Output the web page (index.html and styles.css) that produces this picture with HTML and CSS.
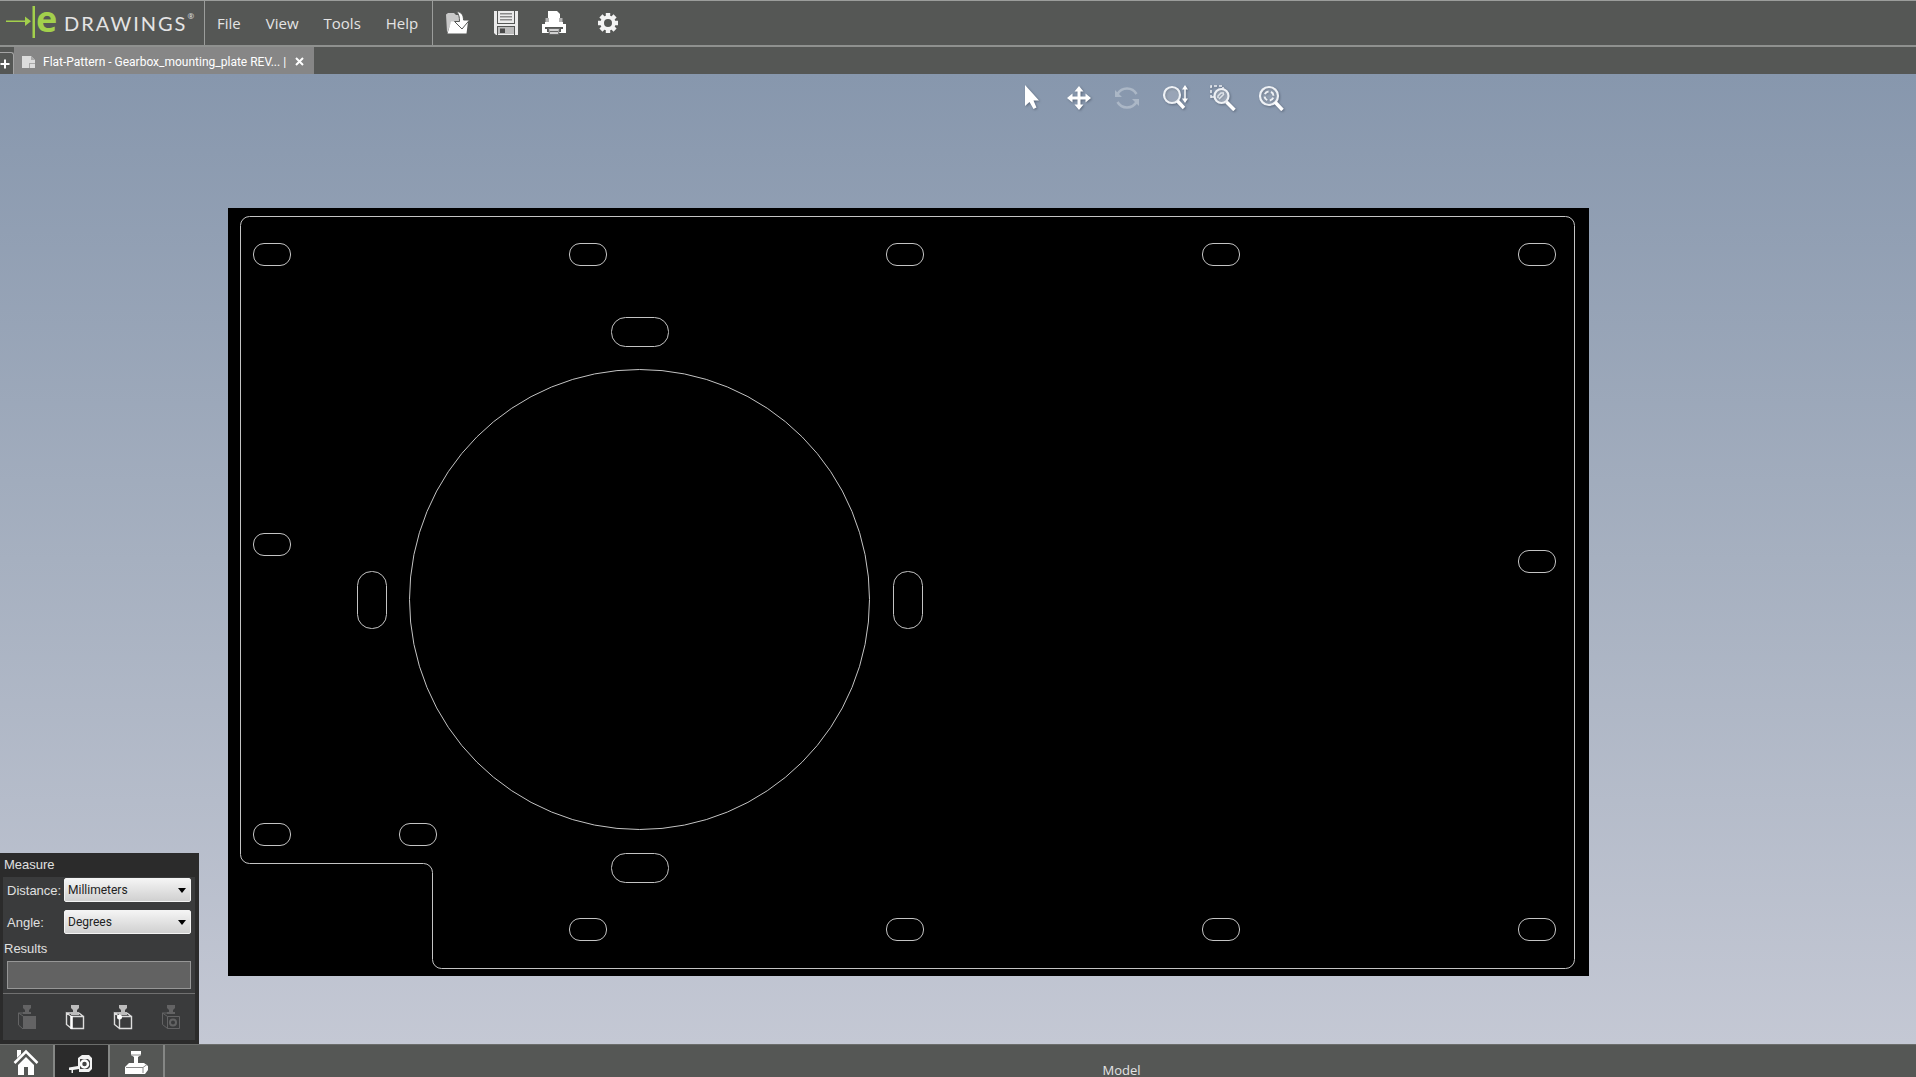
FILE: index.html
```html
<!DOCTYPE html>
<html lang="en">
<head>
<meta charset="utf-8">
<title>eDrawings</title>
<link rel="stylesheet" href="styles.css">
</head>
<body>
<header class="topbar">
  <div class="brand">
    <svg class="brand-mark" width="30" height="34" viewBox="0 0 30 34" aria-hidden="true">
      <path d="M0 14.500H19V16H0zM19 10.500L25 15.200L19 20zM26.500 0H29V32H26.500z"/>
    </svg>
    <span class="brand-e">e</span><span class="brand-name">DRAWINGS</span><span class="brand-reg">®</span>
  </div>
  <nav class="menu">
    <button type="button">File</button>
    <button type="button">View</button>
    <button type="button">Tools</button>
    <button type="button">Help</button>
  </nav>
  <div class="quick">
    <button type="button" aria-label="Open">
      <svg width="26" height="26" viewBox="0 0 26 26">
        <path fill="#c9c9c9" d="M1 4.500L3 3H9L11 5H17L18 10L6 13L2.500 22H2Z"/>
        <path fill="#fff" d="M6 11.500H23L21.500 23.500H2.500Z"/>
        <path fill="#fff" stroke="#555755" d="M11.500 1.500C16.500 2 18.500 5 18.500 10H24.500L17 19L9.500 11.500H14.500C14.500 7 14 4.500 11.500 1.500Z"/>
      </svg>
    </button>
    <button type="button" aria-label="Save">
      <svg width="26" height="26" viewBox="0 0 26 26">
        <path fill="#ececec" d="M1 1H25V25H3L1 23Z"/>
        <path fill="#555755" d="M4 1H5V13H21V1H22V14H4zM4 16H22V25H21V17H5V25H4z"/>
        <path fill="#8a8a8a" d="M7 3H19V4.500H7zM7 6H19V7.500H7zM7 9H19V10.500H7z"/>
        <path fill="#bcbcbc" d="M5 17H21V24H5z"/>
        <path fill="#4a4a4a" d="M7 18.500H12V23H7z"/>
      </svg>
    </button>
    <button type="button" aria-label="Print">
      <svg width="26" height="26" viewBox="0 0 26 26">
        <path fill="#fff" d="M7 1H16L19 4V13H7z"/>
        <path fill="#b4b4b4" d="M4.500 8H21.500V14H4.500z"/>
        <path fill="#fff" d="M8 3H18V12H8zM1 14H4V12H22V14H25V23H1z"/>
        <path fill="#555755" d="M4 17H22V19H20V22H6V19H4z"/>
        <path fill="#d0d0d0" stroke="#666" d="M7.500 18.500H18.500L17.500 24.500H8.500zM9 21.500H17"/>
      </svg>
    </button>
    <button type="button" class="gear" aria-label="Options">
      <svg width="22" height="22" viewBox="-11 -11 22 22">
        <g fill="#f4f4f4">
          <path id="tooth" d="M-2.200 -10H2.200V-6H-2.200zM-2.200 6H2.200V10H-2.200z"/>
          <use href="#tooth" transform="rotate(45)"/>
          <use href="#tooth" transform="rotate(90)"/>
          <use href="#tooth" transform="rotate(135)"/>
        </g>
        <circle r="5.800" fill="none" stroke="#f4f4f4" stroke-width="3.600"/>
      </svg>
    </button>
  </div>
</header>

<div class="tabs">
  <button type="button" class="tab-add" aria-label="New tab">
    <svg width="10" height="10" viewBox="0 0 10 10"><path d="M5 0.500V9.500M0.500 5H9.500" stroke="#fff" stroke-width="2"/></svg>
  </button>
  <div class="tab">
    <svg width="14" height="12" viewBox="0 0 14 12" aria-hidden="true">
      <path fill="#dcdcdc" d="M0 0H9L13 4V12H0z"/><path fill="#a8a8a8" d="M9 0V4H13zM7 7H13V8H7zM7 7H8V12H7z"/>
    </svg>
    <span class="tab-title">Flat-Pattern - Gearbox_mounting_plate REV... |</span>
    <button type="button" class="tab-close" aria-label="Close">
      <svg width="9" height="9" viewBox="0 0 9 9"><path d="M1 1L8 8M8 1L1 8" stroke="#fff" stroke-width="2"/></svg>
    </button>
  </div>
</div>

<main class="viewer">
  <svg class="drawing" viewBox="0 0 1916 969" preserveAspectRatio="xMidYMin meet" role="img" aria-label="Flat pattern of gearbox mounting plate">
    <defs>
      <rect id="slot" x="-18.500" y="-11" width="37" height="22" rx="10.500"/>
      <rect id="slot-wide" x="-28.500" y="-14.500" width="57" height="29" rx="14"/>
    </defs>
    <rect x="228" y="134" width="1361" height="768"/>
    <g fill="none" stroke="#c4c4c4" stroke-width="1">
      <path d="M249.500 142.500H1565.500A9 9 0 0 1 1574.500 151.500V885.500A9 9 0 0 1 1565.500 894.500H441.500A9 9 0 0 1 432.500 885.500V798.500A9 9 0 0 0 423.500 789.500H249.500A9 9 0 0 1 240.500 780.500V151.500A9 9 0 0 1 249.500 142.500Z"/>
      <circle cx="639.500" cy="525.500" r="230"/>
      <use href="#slot" x="272" y="180.500"/>
      <use href="#slot" x="588" y="180.500"/>
      <use href="#slot" x="905" y="180.500"/>
      <use href="#slot" x="1221" y="180.500"/>
      <use href="#slot" x="1537" y="180.500"/>
      <use href="#slot" x="272" y="470.500"/>
      <use href="#slot" x="1537" y="487.500"/>
      <use href="#slot" x="272" y="760.500"/>
      <use href="#slot" x="418" y="760.500"/>
      <use href="#slot" x="588" y="855.500"/>
      <use href="#slot" x="905" y="855.500"/>
      <use href="#slot" x="1221" y="855.500"/>
      <use href="#slot" x="1537" y="855.500"/>
      <use href="#slot-wide" x="640" y="258"/>
      <use href="#slot-wide" x="640" y="794"/>
      <use href="#slot-wide" transform="translate(372 526) rotate(90)"/>
      <use href="#slot-wide" transform="translate(908 526) rotate(90)"/>
    </g>
  </svg>

  <div class="viewtools">
    <button type="button" aria-label="Select">
      <svg width="26" height="26" viewBox="0 0 26 26"><path fill="#fff" d="M7 0V21L11.500 17L15.500 24L18.500 22.500L15.500 15.500H21Z"/></svg>
    </button>
    <button type="button" aria-label="Pan">
      <svg width="26" height="26" viewBox="0 0 26 26"><path fill="#fff" d="M13 1L17.500 6.500H14.500V11.500H19.500V8.500L25 13L19.500 17.500V14.500H14.500V19.500H17.500L13 25L8.500 19.500H11.500V14.500H6.500V17.500L1 13L6.500 8.500V11.500H11.500V6.500H8.500Z"/></svg>
    </button>
    <button type="button" class="off" disabled aria-label="Rotate">
      <svg width="26" height="26" viewBox="0 0 26 26"><g fill="none" stroke="#abb7c6" stroke-width="2.500"><path d="M3.500 9A11 11 0 0 1 22.500 9M22.500 17A11 11 0 0 1 3.500 17"/></g><path fill="#abb7c6" d="M1 5V12H8zM25 21V14H18z"/></svg>
    </button>
    <button type="button" aria-label="Zoom">
      <svg width="26" height="26" viewBox="0 0 26 26"><circle cx="10" cy="10" r="8" fill="#ffffff33" stroke="#eef1f5" stroke-width="2.200"/><path d="M15.500 16L22 23" stroke="#fff" stroke-width="3.500"/><path d="M23 3V15" stroke="#fff" stroke-width="1.500"/><path fill="#fff" d="M23 0L26 4.500H20zM23 18L26 13.500H20z"/></svg>
    </button>
    <button type="button" aria-label="Zoom to area">
      <svg width="26" height="26" viewBox="0 0 26 26"><path d="M1 13V1H13V4M1 12H5" fill="none" stroke="#eef1f5" stroke-width="1.500" stroke-dasharray="3 2"/><circle cx="11.500" cy="11" r="7" fill="#ffffff44" stroke="#eef1f5" stroke-width="2.200"/><path d="M8 13V11L11 8H14M9 14L14 9" fill="none" stroke="#dfe4ea" stroke-width="1.500"/><path d="M16.500 17L24.500 25" stroke="#fff" stroke-width="3.500"/></svg>
    </button>
    <button type="button" aria-label="Zoom to fit">
      <svg width="26" height="26" viewBox="0 0 26 26"><circle cx="11" cy="11" r="9" fill="#ffffff22" stroke="#eef1f5" stroke-width="2.200"/><circle cx="11" cy="11" r="4.500" fill="none" stroke="#eef1f5" stroke-width="2" stroke-dasharray="4.500 2.570" transform="rotate(20 11 11)"/><path d="M17 17L24.500 25" stroke="#fff" stroke-width="3.500"/></svg>
    </button>
  </div>

  <section class="measure">
    <h2>Measure</h2>
    <div class="measure-body">
      <div class="field">
        <label for="distance">Distance:</label>
        <select id="distance"><option>Millimeters</option><option>Inches</option></select>
      </div>
      <div class="field">
        <label for="angle">Angle:</label>
        <select id="angle"><option>Degrees</option><option>Radians</option></select>
      </div>
      <label class="results-label" for="results">Results</label>
      <input id="results" type="text" readonly>
      <div class="filters">
        <button type="button" class="off" disabled aria-label="Select faces">
          <svg width="20" height="26" viewBox="0 0 20 26"><g fill="#8c8c8c"><path d="M6 1H14V4L12 6V8H14V10H6V8H8V6L6 4z"/><path d="M6 12H19V25H6z"/></g><path d="M6 25L1.500 21V9L6 12M1.500 9H13" fill="none" stroke="#8c8c8c"/></svg>
        </button>
        <button type="button" aria-label="Select edges">
          <svg width="20" height="26" viewBox="0 0 20 26"><path fill="#bdbdbd" d="M6 1H14V4L12 6V8H14V11H6V8H8V6L6 4z"/><path d="M6.500 12.500H18.500V24.500H6.500zM6.500 24.500L1.500 20.500V9L6.500 12.500M1.500 9H6M14 9L18.500 12.500" fill="none" stroke="#ddd" stroke-width="1.400"/><path d="M6.500 12V25" stroke="#fff" stroke-width="2.500"/></svg>
        </button>
        <button type="button" aria-label="Select vertices">
          <svg width="20" height="26" viewBox="0 0 20 26"><path fill="#bdbdbd" d="M6 1H14V4L12 6V8H14V11H6V8H8V6L6 4z"/><path d="M6.500 12.500H18.500V24.500H6.500zM6.500 24.500L1.500 20.500V9L6.500 12.500M1.500 9H6M14 9L18.500 12.500" fill="none" stroke="#ddd" stroke-width="1.400"/><circle cx="6.500" cy="13" r="2.500" fill="#fff"/></svg>
        </button>
        <button type="button" class="off" disabled aria-label="Select holes">
          <svg width="20" height="26" viewBox="0 0 20 26"><path fill="#8c8c8c" d="M6 1H14V4L12 6V8H14V10H6V8H8V6L6 4z"/><path d="M6.500 12.500H18.500V24.500H6.500zM6.500 24.500L1.500 20.500V9L6.500 12.500M1.500 9H6" fill="none" stroke="#8c8c8c"/><circle cx="12" cy="18.500" r="3" fill="none" stroke="#8c8c8c" stroke-width="2"/></svg>
        </button>
      </div>
    </div>
  </section>
</main>

<footer class="bottombar">
  <button type="button" aria-label="Home">
    <svg width="26" height="26" viewBox="0 0 26 26"><path fill="#fff" d="M4 1H8V5L4 9zM5 16L13 8L21 16V26H15V18H11V26H5z"/><path d="M1.500 14L13 2.500L24.500 14" fill="none" stroke="#fff" stroke-width="2.500"/></svg>
  </button>
  <button type="button" class="active" aria-label="Measure">
    <svg width="26" height="26" viewBox="0 0 26 26"><path fill="#f2f2f2" d="M10 9L14 6H21L24 9V20L21 23H11V20L5 21V24H3.500V21H1V18.500L10 17z"/><path d="M12 10H20L22 12V18L20 20H12z" fill="#444"/><circle cx="16.500" cy="15" r="3.500" fill="#444" stroke="#fff" stroke-width="2.500"/></svg>
  </button>
  <button type="button" aria-label="Stamp">
    <svg width="26" height="26" viewBox="0 0 26 26"><path fill="#fff" d="M8 2H18V6L15 8V14H21L25 17V21L22 25H2V18L6 14H11V8L8 6z"/><path d="M3 18.500H20L24 15.500M20 18.500V24M8 6H18" fill="none" stroke="#8a8a8a"/></svg>
  </button>
  <span class="sheet-name">Model</span>
</footer>
</body>
</html>
```
FILE: styles.css
```css
* { box-sizing: border-box; }

body {
  display: flex;
  flex-direction: column;
  height: 100vh;
  margin: 0;
  overflow: hidden;
  background: #555755;
  color: #e4e4e4;
  font-family: "Open Sans", "Noto Sans", sans-serif;
}

button {
  display: flex;
  align-items: center;
  justify-content: center;
  margin: 0;
  padding: 0;
  border: 0;
  background: none;
  color: inherit;
  font: inherit;
}

svg { flex: none; }

.topbar {
  display: flex;
  flex: none;
  height: 47px;
  border-top: 1px solid #9b9d9b;
  border-bottom: 2px solid #8f918f;
}

.brand {
  display: flex;
  align-items: center;
  width: 205px;
  padding-left: 6px;
  border-right: 1px solid #9b9d9b;
}

.brand-mark { fill: #a3d04c; }

.brand-e {
  width: 28px;
  padding-bottom: 8px;
  color: #a3d04c;
  font-size: 36px;
  font-weight: 700;
  line-height: 36px;
}

.brand-name {
  font-family: Lato, sans-serif;
  font-size: 20px;
  letter-spacing: 2px;
  line-height: 40px;
}

.brand-reg {
  padding-bottom: 14px;
  font-size: 8px;
  line-height: 8px;
}

.menu {
  display: flex;
  gap: 25px;
  width: 228px;
  padding-left: 12px;
  border-right: 1px solid #9b9d9b;
  font-size: 15px;
}

.quick {
  display: flex;
  gap: 22px;
  padding-left: 12px;
}

.gear { margin-left: 8px; }

.tabs {
  display: flex;
  flex: none;
  height: 27px;
}

.tab-add {
  align-self: flex-end;
  width: 14px;
  height: 22px;
  padding-right: 4px;
  border: solid #a4a4a4;
  border-width: 1px 1px 0 0;
  border-radius: 0 3px 0 0;
}

.tab {
  display: flex;
  align-items: center;
  gap: 7px;
  width: 300px;
  padding: 2px 10px 0 8px;
  background: #868686;
  font-family: Roboto, sans-serif;
  font-size: 12px;
}

.tab-title {
  flex: 1;
  color: #fff;
  line-height: 16px;
  white-space: nowrap;
}

.viewer {
  position: relative;
  display: flex;
  flex: 1;
  flex-direction: column;
  justify-content: space-between;
  min-height: 0;
  background: linear-gradient(#8797ad, #a6b0c0 50%, #c4c8d4);
}

.drawing {
  position: absolute;
  inset: 0;
  width: 100%;
  height: 100%;
}

.viewtools {
  position: relative;
  display: flex;
  gap: 22px;
  padding: 11px 0 0 calc(53% + 3px);
}

.viewtools svg { filter: drop-shadow(1px 1px 1px #5c697c); }
.viewtools .off svg { filter: none; }

.measure {
  position: relative;
  width: 199px;
  padding: 0 4px 4px 3px;
  background: #2b2b2b;
  color: #e0e0e0;
  font-family: "Liberation Sans", sans-serif;
  font-size: 13px;
}

.measure h2 {
  margin: 0;
  padding-left: 1px;
  font-size: 13px;
  font-weight: 400;
  line-height: 24px;
}

.measure-body {
  display: flex;
  flex-direction: column;
  background: #3a3b3c;
}

.field {
  position: relative;
  display: flex;
  align-items: center;
  justify-content: space-between;
  height: 32px;
  padding: 0 4px 6px;
}

.field select {
  appearance: none;
  width: 127px;
  height: 24px;
  padding: 0 3px;
  border: 1px solid #f4f4f4;
  border-radius: 2px;
  background: linear-gradient(#f4f4f4, #d0d0d0);
  color: #222;
  font-family: Roboto, sans-serif;
  font-size: 12px;
}

.field::after {
  content: "";
  position: absolute;
  top: 11px;
  right: 9px;
  border: solid transparent;
  border-width: 5px 4px 0;
  border-top-color: #000;
  pointer-events: none;
}

.results-label {
  padding-left: 1px;
  line-height: 16px;
}

#results {
  height: 28px;
  margin: 4px 4px 4px;
  border: 1px solid #969696;
  background: #626262;
  color: #fff;
}

.filters {
  display: flex;
  justify-content: space-around;
  height: 47px;
  border-top: 1px solid #707070;
}

.filters .off { opacity: 0.5; }

.bottombar {
  display: flex;
  flex: none;
  height: 33px;
  border-top: 1px solid #6b6d6b;
}

.bottombar button {
  align-items: flex-end;
  width: 55px;
  padding: 0 2px 2px 0;
  border-right: 2px solid #858785;
}

.bottombar .active { background: #2b2b2b; }

.sheet-name {
  margin: auto auto 0;
  padding-left: 162px;
  font-size: 13px;
  line-height: 14px;
}
```
